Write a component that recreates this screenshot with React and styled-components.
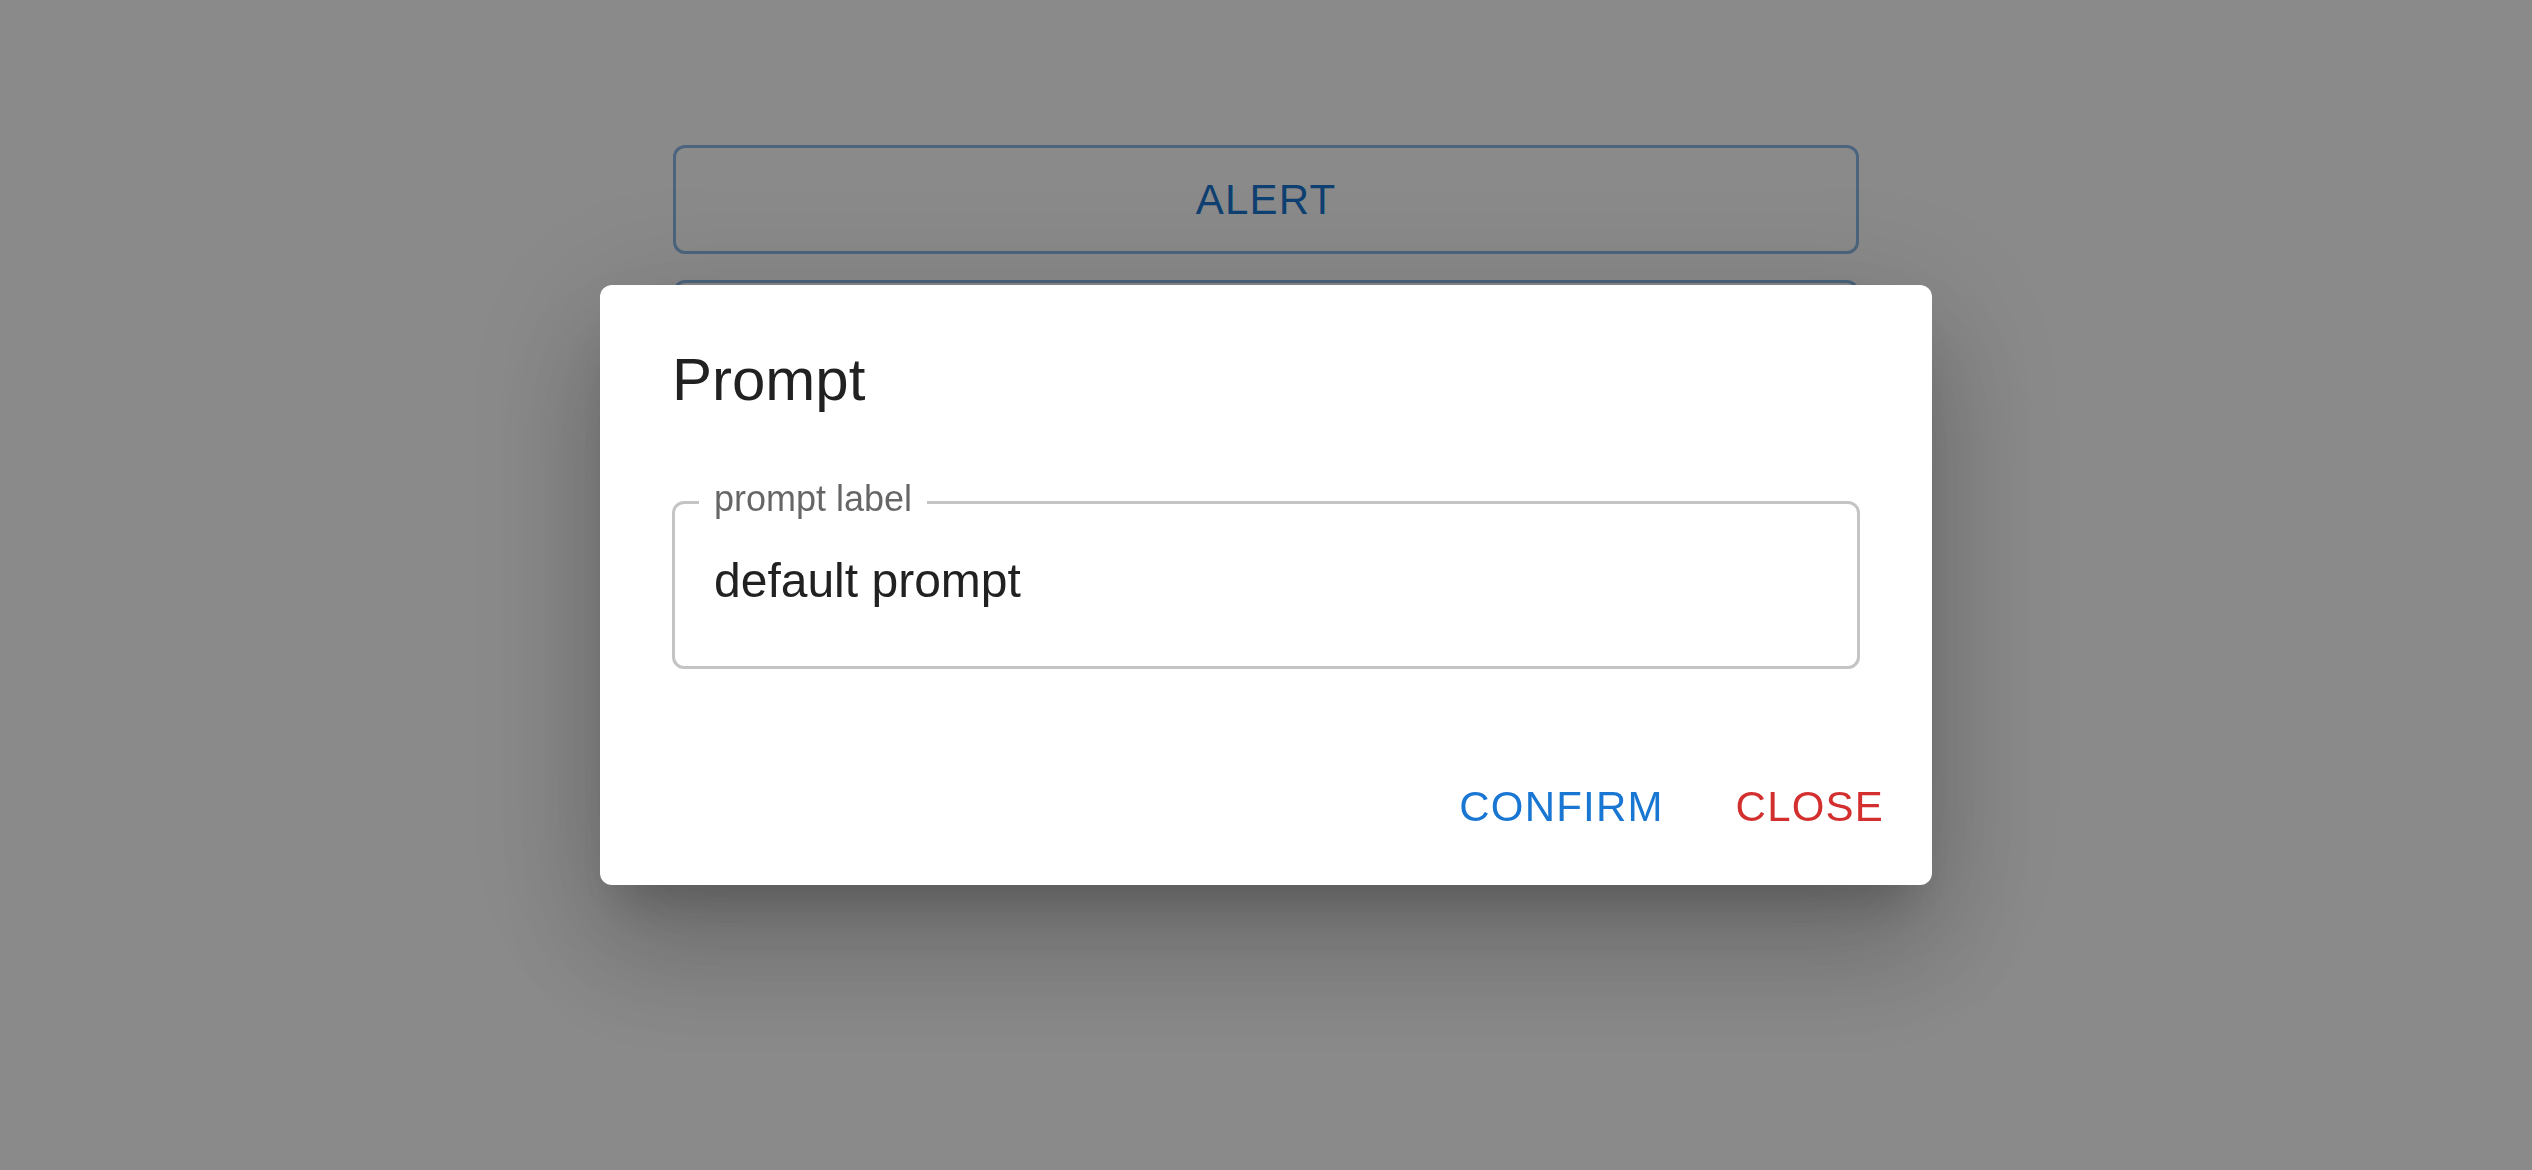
import styled, { createGlobalStyle } from "styled-components";

const GlobalStyle = createGlobalStyle`
  html, body {
    margin: 0;
    padding: 0;
    background: #ffffff;
    font-family: "Liberation Sans", Arial, Helvetica, sans-serif;
  }
  * {
    box-sizing: border-box;
  }
`;

const Page = styled.div`
  min-height: 100vh;
  padding-top: 145px;
  display: flex;
  flex-direction: column;
  align-items: center;
  gap: 26px;
`;

const OutlinedButton = styled.button`
  width: 1186px;
  height: 109px;
  border: 3px solid rgba(25, 118, 210, 0.5);
  border-radius: 12px;
  background: transparent;
  color: #1976d2;
  font-family: inherit;
  font-size: 42px;
  font-weight: 500;
  letter-spacing: 1.2px;
  text-transform: uppercase;
  cursor: pointer;
`;

const Backdrop = styled.div`
  position: fixed;
  inset: 0;
  background: rgba(0, 0, 0, 0.46);
  display: flex;
  align-items: center;
  justify-content: center;
`;

const Dialog = styled.div`
  width: 1332px;
  background: #ffffff;
  border-radius: 12px;
  box-shadow: 0px 33px 45px -21px rgba(0, 0, 0, 0.2),
    0px 72px 114px 9px rgba(0, 0, 0, 0.14),
    0px 27px 138px 24px rgba(0, 0, 0, 0.12);
  display: flex;
  flex-direction: column;
`;

const Title = styled.h2`
  margin: 0;
  padding: 47px 72px 49px;
  font-size: 60px;
  line-height: 96px;
  font-weight: 500;
  color: rgba(0, 0, 0, 0.87);
`;

const Content = styled.div`
  padding: 24px 72px 59px;
`;

const Field = styled.div`
  position: relative;
  height: 168px;
  border: 3px solid #c4c4c4;
  border-radius: 12px;
  padding: 42px 39px 0;
`;

const FieldLabel = styled.label`
  position: absolute;
  top: -23px;
  left: 24px;
  padding: 0 15px;
  background: #ffffff;
  font-size: 36px;
  line-height: 36px;
  color: rgba(0, 0, 0, 0.6);
`;

const Input = styled.input`
  display: block;
  width: 100%;
  height: 69px;
  padding: 0;
  border: none;
  outline: none;
  background: transparent;
  font-family: inherit;
  font-size: 48px;
  color: rgba(0, 0, 0, 0.87);
`;

const Actions = styled.div`
  display: flex;
  justify-content: flex-end;
  align-items: center;
  gap: 24px;
  padding: 24px;
`;

const TextButton = styled.button`
  height: 109px;
  min-width: 192px;
  padding: 0 24px;
  border: none;
  border-radius: 12px;
  background: transparent;
  color: ${(p) => p.$color};
  font-family: inherit;
  font-size: 42px;
  font-weight: 500;
  letter-spacing: 1.2px;
  text-transform: uppercase;
  cursor: pointer;
`;

const App = () => {
  return (
    <>
      <GlobalStyle />
      <Page>
        <OutlinedButton>Alert</OutlinedButton>
        <OutlinedButton>Confirm</OutlinedButton>
        <OutlinedButton>Prompt</OutlinedButton>
      </Page>
      <Backdrop>
        <Dialog role="dialog">
          <Title>Prompt</Title>
          <Content>
            <Field>
              <FieldLabel htmlFor="prompt-input">prompt label</FieldLabel>
              <Input id="prompt-input" defaultValue="default prompt" />
            </Field>
          </Content>
          <Actions>
            <TextButton $color="#1976d2">Confirm</TextButton>
            <TextButton $color="#d32f2f">Close</TextButton>
          </Actions>
        </Dialog>
      </Backdrop>
    </>
  );
};

export default App;
